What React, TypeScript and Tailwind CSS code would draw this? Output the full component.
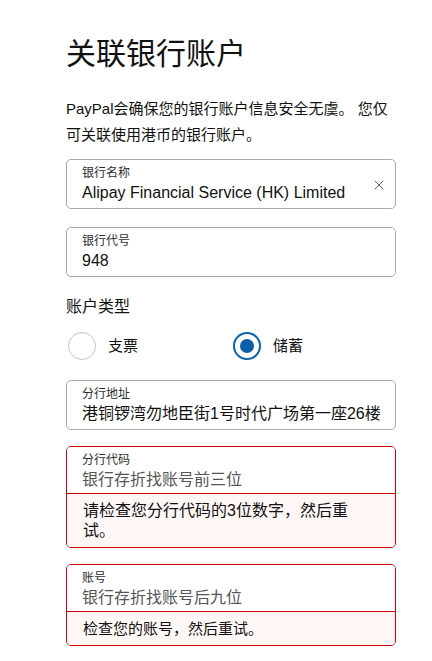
import { X } from 'lucide-react'

const FONT = { fontFamily: '"Liberation Sans", "Noto Sans CJK SC", sans-serif' }

function Field({
  label,
  value,
  placeholder,
  clearable,
  error,
  errorSize = 'text-[16px]',
}: {
  label: string
  value?: string
  placeholder?: string
  clearable?: boolean
  error?: string
  errorSize?: string
}) {
  return (
    <div
      className={
        error
          ? 'rounded-[5px] border border-[#d20000] overflow-hidden'
          : 'rounded-[5px] border border-[#a8a8a8]'
      }
    >
      <div
        className={
          error
            ? 'flex items-center pl-[15px] pr-[8px] pt-[5px] pb-[2px] bg-white'
            : 'flex items-center pl-[15px] pr-[8px] pt-[5px] pb-[4px] bg-white rounded-[5px]'
        }
      >
        <div className="flex-1 min-w-0">
          <div className="text-[12px] leading-[17px] text-[#2c2e2f]">{label}</div>
          <div
            className={
              value
                ? 'text-[16px] leading-[22px] text-[#111] whitespace-nowrap'
                : 'text-[16px] leading-[22px] text-[#555] whitespace-nowrap'
            }
          >
            {value ?? placeholder}
          </div>
        </div>
        {clearable && <X size={16} strokeWidth={1.1} className="text-[#222] shrink-0" />}
      </div>
      {error && (
        <div className="border-t border-[#d20000] bg-[#fff6f6] pl-[16px] pt-[7px] pb-[6px]">
          <p className={`max-w-[276px] leading-[20px] text-[#111] ${errorSize}`}>{error}</p>
        </div>
      )}
    </div>
  )
}

function Radio({ label, checked }: { label: string; checked?: boolean }) {
  return (
    <div className="flex items-center gap-[12px] pl-[2px]">
      {checked ? (
        <span className="w-[28px] h-[28px] rounded-full border-2 border-[#0b63ad] flex items-center justify-center">
          <span className="w-[14px] h-[14px] rounded-full bg-[#0b5fa8]" />
        </span>
      ) : (
        <span className="w-[28px] h-[28px] rounded-full border border-[#c4c4c4] bg-white" />
      )}
      <span className="text-[15px] leading-[22px] text-[#111]">{label}</span>
    </div>
  )
}

export default function App() {
  return (
    <div className="w-[432px] h-[661px] bg-white overflow-hidden" style={FONT}>
      <div className="pl-[66px] pr-[36px] pt-[36px]">
        <h1 className="text-[30px] leading-[36px] font-normal text-[#111]">关联银行账户</h1>
        <p className="mt-[24px] text-[15px] leading-[26px] text-[#111]">
          PayPal会确保您的银行账户信息安全无虞。 您仅可关联使用港币的银行账户。
        </p>

        <div className="mt-[11px]">
          <Field label="银行名称" value="Alipay Financial Service (HK) Limited" clearable />
        </div>
        <div className="mt-[18px]">
          <Field label="银行代号" value="948" />
        </div>

        <div className="mt-[18px] text-[16px] leading-[24px] text-[#111]">账户类型</div>
        <div className="mt-[13px] grid grid-cols-2">
          <Radio label="支票" />
          <Radio label="储蓄" checked />
        </div>

        <div className="mt-[20px]">
          <Field label="分行地址" value="港铜锣湾勿地臣街1号时代广场第一座26楼" />
        </div>
        <div className="mt-[16px]">
          <Field
            label="分行代码"
            placeholder="银行存折找账号前三位"
            error="请检查您分行代码的3位数字，然后重试。"
          />
        </div>
        <div className="mt-[16px]">
          <Field
            label="账号"
            placeholder="银行存折找账号后九位"
            error="检查您的账号，然后重试。"
            errorSize="text-[15px]"
          />
        </div>
      </div>
    </div>
  )
}
